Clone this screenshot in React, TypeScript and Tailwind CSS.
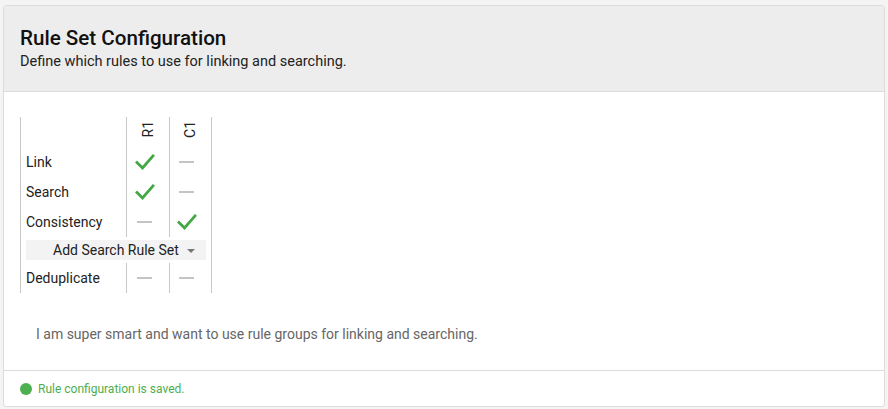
import type { ReactNode } from "react";

type Cell = "check" | "dash";

const rows: { label: string; cells: Cell[] }[] = [
  { label: "Link", cells: ["check", "dash"] },
  { label: "Search", cells: ["check", "dash"] },
  { label: "Consistency", cells: ["dash", "check"] },
];

const Check = () => (
  <svg width="20" height="16" viewBox="0 0 20 16" fill="none">
    <path
      d="M2 8.5 L7.5 14 L18 2"
      stroke="#43a843"
      strokeWidth="2.8"
      strokeLinecap="square"
    />
  </svg>
);

const Dash = () => <span className="block h-[2px] w-[15px] bg-[#c4c4c4]" />;

const Mark = ({ type }: { type: Cell }) => (
  <span className="flex pr-[7px]">{type === "check" ? <Check /> : <Dash />}</span>
);

// one row of the rule grid
const Row = ({ label, children }: { label: ReactNode; children: ReactNode }) => (
  <div className="flex h-[30px]">
    <div className="flex w-[105px] items-center pl-[5px]">{label}</div>
    {children}
  </div>
);

const Col = ({ children, last }: { children?: ReactNode; last?: boolean }) => (
  <div
    className={`flex items-center justify-center border-l border-[#c8c8c8] ${
      last ? "w-[43px] border-r pr-[1px]" : "w-[43px]"
    }`}
  >
    {children}
  </div>
);

const Rotated = ({ text }: { text: string }) => (
  <span className="mt-[4px] self-start pl-[1px] text-[14px] leading-none [writing-mode:vertical-rl] rotate-180">
    {text}
  </span>
);

export default function App() {
  return (
    <div
      className="min-h-[409px] bg-[#f4f4f4] px-[3px] pt-[5px] text-[#222]"
      style={{ fontFamily: "Roboto, 'Liberation Sans', sans-serif" }}
    >
      <div className="overflow-hidden rounded-[3px] border border-[#dcdcdc] bg-white">
        {/* Header */}
        <div className="h-[86px] border-b border-[#dcdcdc] bg-[#ededed] px-4 pt-[20px]">
          <h1 className="text-[20.6px] leading-[25px] font-medium text-[#111]">
            Rule Set Configuration
          </h1>
          <p className="mt-[1px] text-[14.5px] leading-[20px]">
            Define which rules to use for linking and searching.
          </p>
        </div>

        {/* Body */}
        <div className="px-4 pt-[25px] pb-[26px]">
          <div className="inline-flex flex-col border-l border-[#c8c8c8] text-[14px]">
            <Row label="">
              <Col>
                <Rotated text="R1" />
              </Col>
              <Col last>
                <Rotated text="C1" />
              </Col>
            </Row>
            {rows.map((r) => (
              <Row key={r.label} label={r.label}>
                <Col>
                  <Mark type={r.cells[0]} />
                </Col>
                <Col last>
                  <Mark type={r.cells[1]} />
                </Col>
              </Row>
            ))}
            {/* Add rule set dropdown */}
            <div className="flex h-[26px] w-[191px] items-center border-r border-[#c8c8c8] pl-[5px]">
              <div className="flex h-[20px] w-[180px] items-center bg-[#f3f3f3] pl-[27px]">
                <span>Add Search Rule Set</span>
                <span className="mt-[2px] ml-[8px] h-0 w-0 border-x-[4px] border-t-[4px] border-x-transparent border-t-[#777]" />
              </div>
            </div>
            <Row label="Deduplicate">
              <Col>
                <Mark type="dash" />
              </Col>
              <Col last>
                <Mark type="dash" />
              </Col>
            </Row>
          </div>

          <p className="mt-[31px] pl-4 text-[14px] leading-[20px] text-[#666]">
            I am super smart and want to use rule groups for linking and searching.
          </p>
        </div>

        {/* Footer */}
        <div className="flex h-[36px] items-center gap-[6px] border-t border-[#dcdcdc] px-4">
          <span className="h-[12px] w-[12px] rounded-full bg-[#4caf50]" />
          <span className="text-[12px] text-[#4caf50]">Rule configuration is saved.</span>
        </div>
      </div>
    </div>
  );
}
